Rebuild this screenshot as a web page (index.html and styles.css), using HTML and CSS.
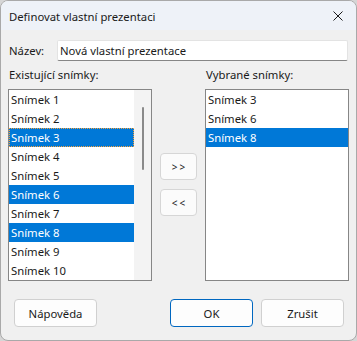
FILE: index.html
```html
<!DOCTYPE html>
<html lang="cs">
<head>
    <meta charset="UTF-8">
    <title>Definovat vlastní prezentaci</title>
    <link rel="stylesheet" href="styles.css">
</head>
<body>
<div class="window">
    <div class="titlebar">
        <span class="title">Definovat vlastní prezentaci</span>
        <svg class="close" width="10" height="10" viewBox="0 0 10 10">
            <path d="M0.5 0.5 L9.5 9.5 M9.5 0.5 L0.5 9.5" stroke="#1a1a1a" stroke-width="1" fill="none"/>
        </svg>
    </div>

    <div class="content">
        <div class="name-row">
            <label class="name-label" for="name">Název:</label>
            <input class="name-input" id="name" type="text" value="Nová vlastní prezentace">
        </div>

        <div class="lists">
            <div class="col">
                <div class="list-label">Existující snímky:</div>
                <div class="listbox">
                    <div class="items">
                        <div class="item">Snímek 1</div>
                        <div class="item">Snímek 2</div>
                        <div class="item selected focused">Snímek 3</div>
                        <div class="item">Snímek 4</div>
                        <div class="item">Snímek 5</div>
                        <div class="item selected">Snímek 6</div>
                        <div class="item">Snímek 7</div>
                        <div class="item selected">Snímek 8</div>
                        <div class="item">Snímek 9</div>
                        <div class="item">Snímek 10</div>
                    </div>
                    <div class="scrollbar"><div class="thumb"></div></div>
                </div>
            </div>

            <div class="col-mid">
                <button class="arrow-btn">&gt;&gt;</button>
                <button class="arrow-btn">&lt;&lt;</button>
            </div>

            <div class="col">
                <div class="list-label">Vybrané snímky:</div>
                <div class="listbox">
                    <div class="items full">
                        <div class="item">Snímek 3</div>
                        <div class="item">Snímek 6</div>
                        <div class="item selected">Snímek 8</div>
                    </div>
                </div>
            </div>
        </div>

        <div class="footer">
            <button class="btn">Nápověda</button>
            <div class="footer-right">
                <button class="btn primary">OK</button>
                <button class="btn">Zrušit</button>
            </div>
        </div>
    </div>
</div>
</body>
</html>
```

FILE: styles.css
```css
* {
    box-sizing: border-box;
}

body {
    margin: 0;
    background: #d6d6d6;
    font-family: 'Noto Sans', 'Segoe UI', sans-serif;
    font-size: 11.3px;
    color: #1a1a1a;
}

.window {
    width: 357px;
    height: 341px;
    background: #f0f0f0;
    border: 1px solid #a9a9a9;
    border-radius: 8px;
    overflow: hidden;
}

.titlebar {
    height: 29px;
    background: #eef2f8;
    display: flex;
    align-items: center;
    justify-content: space-between;
    padding: 0 13px 0 8px;
}

.title {
    padding-top: 1px;
}

.close {
    display: block;
    margin-top: 1px;
}

.content {
    padding: 10px 7px 0 7px;
}

.name-row {
    display: flex;
    align-items: center;
    height: 21px;
}

.name-label {
    width: 49px;
    padding-left: 1px;
}

.name-input {
    width: 291px;
    height: 21px;
    border: 1px solid #e3e3e3;
    border-bottom-color: #868686;
    border-radius: 2px;
    background: #fff;
    font: inherit;
    color: #1a1a1a;
    padding: 0 2px;
    outline: none;
}

.lists {
    display: flex;
    align-items: flex-start;
    margin-top: 6px;
}

.col {
    width: 144px;
}

.list-label {
    height: 16px;
    line-height: 16px;
    padding-left: 1px;
    margin-bottom: 6px;
}

.listbox {
    height: 192px;
    border: 1px solid #868686;
    background: #fff;
    display: flex;
}

.items {
    width: 125px;
}

.items.full {
    width: 100%;
}

.item {
    height: 19px;
    line-height: 19px;
    padding-left: 2px;
    white-space: nowrap;
}

.item.selected {
    background: #0078d7;
    color: #fff;
}

.item.focused {
    outline: 1px dotted #f7a23c;
    outline-offset: -1px;
}

.scrollbar {
    flex: 1;
    background: #f3f3f3;
    padding-top: 17px;
    display: flex;
    justify-content: center;
}

.thumb {
    width: 2px;
    height: 63px;
    background: #8a8a8a;
    border-radius: 1px;
}

.col-mid {
    width: 37px;
    margin: 0 8px;
    padding-top: 86px;
    display: flex;
    flex-direction: column;
    gap: 9px;
}

.arrow-btn {
    width: 37px;
    height: 27px;
    background: #fbfbfb;
    border: 1px solid #d6d6d6;
    border-radius: 4px;
    font-family: inherit;
    font-size: 10px;
    letter-spacing: 2px;
    text-indent: 2px;
    color: #1a1a1a;
    padding: 0;
}

.footer {
    display: flex;
    justify-content: space-between;
    margin-top: 18px;
    padding: 0 5px 0 6px;
}

.footer-right {
    display: flex;
    gap: 8px;
}

.btn {
    width: 83px;
    height: 28px;
    background: #fdfdfd;
    border: 1px solid #d0d0d0;
    border-radius: 4px;
    font: inherit;
    color: #1a1a1a;
    padding: 0;
}

.btn.primary {
    border-color: #0067c0;
}
```
